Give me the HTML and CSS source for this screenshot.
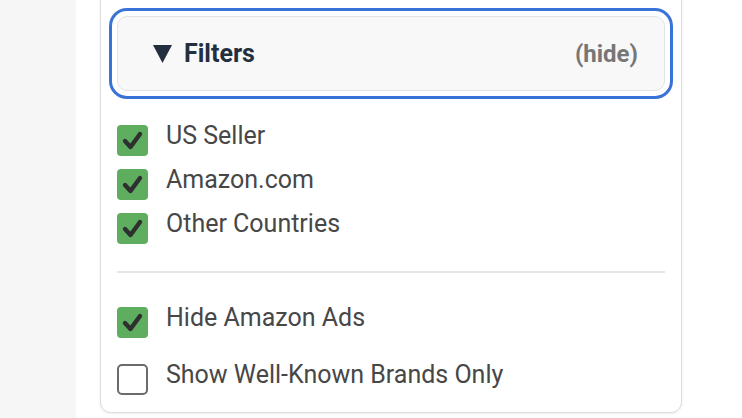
FILE: index.html
```html
<!DOCTYPE html>
<html>
<head>
  <title>Filters</title>
  <link rel="stylesheet" href="styles.css">
</head>
<body>
  <div class="rail"></div>
  <main class="main">
    <section class="panel">
      <div class="summary">
        <span class="summary-title">
          <svg class="caret" width="19" height="18" viewBox="0 0 19 18"><polygon points="0,0 19,0 9.5,18" fill="#232f3e"/></svg>
          Filters
        </span>
        <span class="summary-toggle">(hide)</span>
      </div>

      <div class="group group-sources">
        <label class="option">
          <span class="box checked"><svg width="31" height="31" viewBox="0 0 31 31"><polyline points="8,16 13.5,22 23,9" fill="none" stroke="#2f2f2f" stroke-width="4.4" stroke-linecap="round" stroke-linejoin="round"/></svg></span>
          <span class="option-text">US Seller</span>
        </label>
        <label class="option">
          <span class="box checked"><svg width="31" height="31" viewBox="0 0 31 31"><polyline points="8,16 13.5,22 23,9" fill="none" stroke="#2f2f2f" stroke-width="4.4" stroke-linecap="round" stroke-linejoin="round"/></svg></span>
          <span class="option-text">Amazon.com</span>
        </label>
        <label class="option">
          <span class="box checked"><svg width="31" height="31" viewBox="0 0 31 31"><polyline points="8,16 13.5,22 23,9" fill="none" stroke="#2f2f2f" stroke-width="4.4" stroke-linecap="round" stroke-linejoin="round"/></svg></span>
          <span class="option-text">Other Countries</span>
        </label>
      </div>

      <hr class="divider">

      <div class="group group-extras">
        <label class="option">
          <span class="box checked"><svg width="31" height="31" viewBox="0 0 31 31"><polyline points="8,16 13.5,22 23,9" fill="none" stroke="#2f2f2f" stroke-width="4.4" stroke-linecap="round" stroke-linejoin="round"/></svg></span>
          <span class="option-text">Hide Amazon Ads</span>
        </label>
        <label class="option">
          <span class="box"></span>
          <span class="option-text">Show Well-Known Brands Only</span>
        </label>
      </div>
    </section>
  </main>
</body>
</html>
```

FILE: styles.css
```css
html, body {
  height: 100%;
  margin: 0;
}

body {
  display: flex;
  background: #fff;
  font-family: Roboto, "Liberation Sans", sans-serif;
  overflow: hidden;
}

.rail {
  width: 76px;
  flex: none;
  background: #f6f6f6;
}

.main {
  flex: 1;
  padding-left: 24px;
}

.panel {
  width: 582px;
  box-sizing: border-box;
  margin-top: -20px;
  padding: 35px 16px 17px;
  border: 1px solid #dcdcdc;
  border-radius: 0 0 11px 11px;
  box-shadow: 0 1px 3px rgba(0, 0, 0, 0.08);
  background: #fff;
}

.summary {
  height: 75px;
  box-sizing: border-box;
  display: flex;
  align-items: center;
  justify-content: space-between;
  padding: 0 26px 0 35px;
  border: 1px solid #e3e3e3;
  border-radius: 10px;
  background: #f8f8f9;
  box-shadow: 0 0 0 5px #fff, 0 0 0 8px #3a73d7;
  font-weight: bold;
}

.summary-title {
  display: flex;
  align-items: center;
  gap: 12px;
  font-size: 25px;
  color: #232f3e;
}

.caret {
  margin-top: 1px;
}

.summary-toggle {
  font-size: 24px;
  color: #767676;
}

.group {
  display: flex;
  flex-direction: column;
}

.group-sources {
  gap: 10px;
  margin-top: 31px;
}

.group-extras {
  gap: 23px;
}

.option {
  display: flex;
  align-items: flex-start;
  gap: 18px;
  font-size: 25px;
  line-height: 28px;
  color: #474747;
}

.box {
  width: 31px;
  height: 31px;
  box-sizing: border-box;
  margin-top: 3px;
  border: 2px solid #6b6b6b;
  border-radius: 5px;
  background: #fff;
}

.box.checked {
  border: none;
  border-radius: 4px;
  background: #5fad5f;
}

.box svg {
  display: block;
}

.divider {
  margin: 27px 0 31px;
  border: none;
  border-top: 2px solid #e6e6e6;
}
```
